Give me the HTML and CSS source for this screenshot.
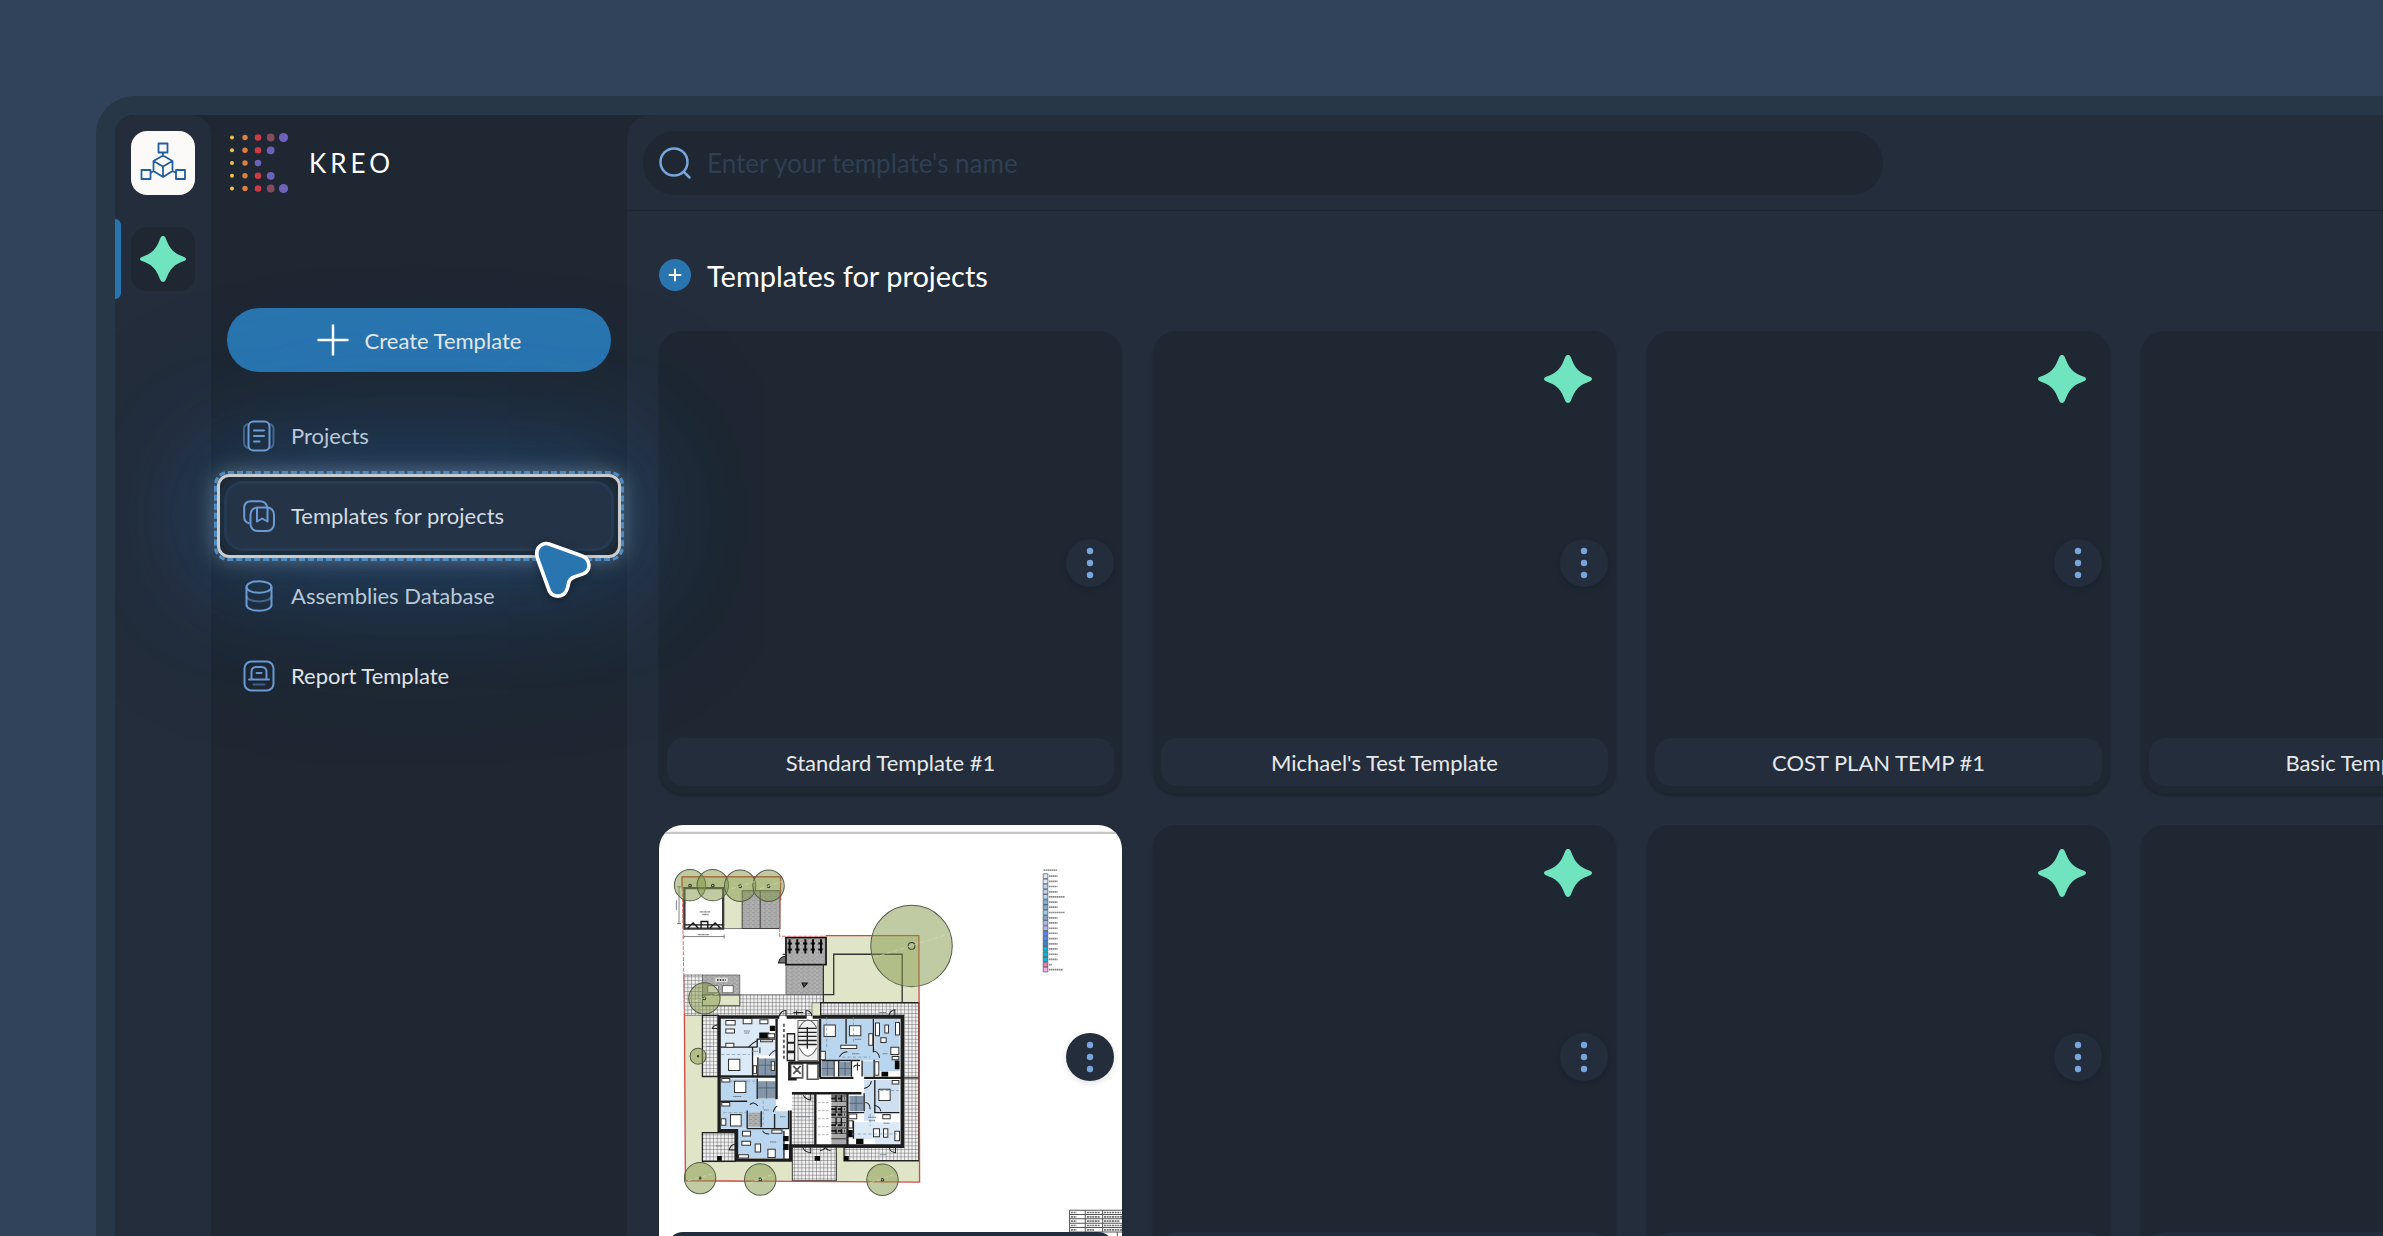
FILE: index.html
```html
<!DOCTYPE html>
<html lang="en">
<head>
    <meta charset="UTF-8">
    <meta name="viewport" content="width=device-width, initial-scale=1.0">
    <title>Kreo - Templates for projects</title>
    <link rel="stylesheet" href="styles.css">
</head>
<body>
    <svg class="defs" width="0" height="0" aria-hidden="true">
        <symbol id="star" viewBox="0 0 48 48">
            <path d="M26.700 2C29 7.500 30.500 11.500 34 15C37.500 18.500 41 19.800 46 21.800C48.700 22.900 48.700 25.100 46 26.200C41 28.200 37.500 29.500 34 33C30.500 36.500 29 40.500 26.700 46C25.600 48.600 22.400 48.600 21.300 46C19 40.500 17.500 36.500 14 33C10.500 29.500 7 28.200 2 26.200C-.7 25.100-.7 22.900 2 21.800C7 19.800 10.500 18.500 14 15C17.500 11.500 19 7.500 21.300 2C22.400-.6 25.600-.6 26.700 2Z" fill="#70e4bf"/>
        </symbol>
        <symbol id="dots" viewBox="0 0 48 48">
            <g fill="#77a5dc"><circle cx="24" cy="12" r="3.200"/><circle cx="24" cy="24" r="3.200"/><circle cx="24" cy="36" r="3.200"/></g>
        </symbol>
    </svg>

    <div class="window">
        <nav class="rail" aria-label="Products">
            <a href="#" class="rail-item rail-light" aria-label="Assemblies">
                <svg class="rail-icon" viewBox="0 0 64 64" fill="none" stroke="#235f9f" stroke-width="1.800" stroke-linejoin="round">
                    <rect x="27.500" y="12.500" width="9" height="9"/>
                    <rect x="10.500" y="39" width="9" height="9"/>
                    <rect x="45" y="39" width="9" height="9"/>
                    <path d="M32 21.500V24.500L41.500 30V40L32 46L22.500 40V30L32 24.500M22.500 30L32 35.500L41.500 30M32 35.500V46M22.500 40L19.500 42M41.500 40L45 42"/>
                </svg>
            </a>
            <a href="#" class="rail-item active" aria-label="Templates">
                <svg class="rail-star"><use href="#star"/></svg>
            </a>
        </nav>

        <aside class="sidebar">
            <div class="logo">
                <svg viewBox="0 0 64 64" aria-hidden="true">
                    <g fill="#f2c14f"><circle cx="5" cy="6.500" r="2"/><circle cx="5" cy="19.300" r="2"/><circle cx="5" cy="32" r="2"/><circle cx="5" cy="44.800" r="2"/><circle cx="5" cy="57.500" r="2"/></g>
                    <g fill="#de7f41"><circle cx="18" cy="6.500" r="2.700"/><circle cx="18" cy="19.300" r="2.700"/><circle cx="18" cy="32" r="2.700"/><circle cx="18" cy="44.800" r="2.700"/><circle cx="18" cy="57.500" r="2.700"/></g>
                    <g fill="#cc3a45"><circle cx="31" cy="6.500" r="3.300"/><circle cx="31" cy="19.300" r="3.300"/><circle cx="31" cy="44.800" r="3.300"/><circle cx="31" cy="57.500" r="3.300"/></g>
                    <g fill="#864a60"><circle cx="43.700" cy="6.500" r="3.900"/><circle cx="43.700" cy="57.500" r="3.900"/></g>
                    <g fill="#6c62bb"><circle cx="31" cy="32" r="3.300"/><circle cx="43.700" cy="19.300" r="3.900"/><circle cx="43.700" cy="44.800" r="3.900"/><circle cx="56.500" cy="6.500" r="4.600"/><circle cx="56.500" cy="57.500" r="4.600"/></g>
                </svg>
                <span>KREO</span>
            </div>

            <button type="button" class="create-btn">
                <svg viewBox="0 0 32 32" stroke="#fff" stroke-width="2.500" stroke-linecap="round"><path d="M16 1.500V30.500M1.500 16H30.500"/></svg>
                Create Template
            </button>

            <nav class="menu" aria-label="Main">
                <a href="#" class="menu-item dimmed">
                    <svg viewBox="0 0 32 32" fill="none" stroke="#6b9bd5" stroke-width="2" stroke-linecap="round">
                        <path d="M5.500 4C2.800 4.400 1 6 1 9V22C1 25.500 2.800 27.500 5.500 28M26.500 4C29 4.400 30.500 6 30.500 9V22C30.500 25.500 29 27.500 26.500 28" opacity=".5"/>
                        <rect x="5.500" y="1.500" width="21" height="29" rx="5"/>
                        <path d="M11 10.500H21M11 16H21M11 21.500H16.500"/>
                    </svg>
                    <span>Projects</span>
                </a>
                <a href="#" class="menu-item selected">
                    <svg viewBox="0 0 32 32" fill="none" stroke="#6b9bd5" stroke-width="2" stroke-linejoin="round">
                        <path d="M6.500 23.500C3 22.500 1.200 20.500 1.200 17V8C1.200 3.500 3.500 1.200 8 1.200H16.500C20.500 1.200 23.500 3 24.200 7.200"/>
                        <rect x="7.500" y="7.500" width="23.500" height="23.500" rx="7"/>
                        <path d="M14 8V21.500L19.200 18.500L24.500 21.500V8"/>
                    </svg>
                    <span>Templates for projects</span>
                    <i class="spotlight"></i>
                    <svg class="cursor" viewBox="1030 540 180 180" aria-hidden="true">
                        <path d="M1057 554C1064 550 1070 549 1078 552L1178 588C1202 598 1205 630 1182 641C1160 650 1143 649 1138 665C1134 680 1134 695 1120 704C1106 713 1086 708 1079 693L1044 597C1038 577 1042 562 1057 554Z" fill="#2975b0" stroke="#fff" stroke-width="11"/>
                    </svg>
                </a>
                <a href="#" class="menu-item dimmed">
                    <svg viewBox="0 0 32 32" fill="none" stroke="#6b9bd5" stroke-width="2">
                        <ellipse cx="16" cy="7" rx="12.500" ry="5.800"/>
                        <path d="M3.500 7V25C3.500 28.200 9 30.800 16 30.800S28.500 28.200 28.500 25V7"/>
                        <path d="M3.500 16C3.500 19.200 9 21.500 16 21.500S28.500 19.200 28.500 16" opacity=".5"/>
                    </svg>
                    <span>Assemblies Database</span>
                </a>
                <a href="#" class="menu-item">
                    <svg viewBox="0 0 32 32" fill="none" stroke="#6b9bd5" stroke-width="2" stroke-linecap="round">
                        <rect x="1.500" y="1.500" width="29" height="29" rx="7"/>
                        <path d="M6 19.500H26M8.500 19V12C8.500 9 10.500 7 13.500 7H18.500C21.500 7 23.500 9 23.500 12V19M13.500 13H18.500"/>
                        <path d="M10.500 24.500H21.500" opacity=".5"/>
                    </svg>
                    <span>Report Template</span>
                </a>
            </nav>
        </aside>

        <main class="main">
            <header class="topbar">
                <label class="search">
                    <svg viewBox="0 0 32 32" fill="none" stroke="#77a5dc" stroke-width="2.500" stroke-linecap="round"><circle cx="15" cy="15" r="13.500"/><path d="M25 25L30.500 30.500"/></svg>
                    <input type="text" placeholder="Enter your template's name" aria-label="Enter your template's name">
                </label>
            </header>

            <section class="content">
                <div class="heading">
                    <button type="button" class="add-btn" aria-label="Add template">
                        <svg viewBox="0 0 32 32" stroke="#fff" stroke-width="2" stroke-linecap="round"><path d="M16 10.500V21.500M10.500 16H21.500"/></svg>
                    </button>
                    <h1>Templates for projects</h1>
                </div>

                <div class="cards">
                    <article class="card">
                        <button type="button" class="more" aria-label="More"><svg><use href="#dots"/></svg></button>
                        <div class="card-name">Standard Template #1</div>
                    </article>
                    <article class="card">
                        <svg class="badge"><use href="#star"/></svg>
                        <button type="button" class="more" aria-label="More"><svg><use href="#dots"/></svg></button>
                        <div class="card-name">Michael's Test Template</div>
                    </article>
                    <article class="card">
                        <svg class="badge"><use href="#star"/></svg>
                        <button type="button" class="more" aria-label="More"><svg><use href="#dots"/></svg></button>
                        <div class="card-name">COST PLAN TEMP #1</div>
                    </article>
                    <article class="card">
                        <div class="card-name">Basic Template #1</div>
                    </article>

                    <article class="card">
                        <svg class="plan" viewBox="58 75 1386 1386" aria-hidden="true">
                            <defs>
                                <pattern id="tile" width="11" height="11" patternUnits="userSpaceOnUse"><rect width="11" height="11" fill="#f1f1f1"/><path d="M0 0H11M0 0V11" stroke="#666" stroke-width="3"/></pattern>
                                <pattern id="brick" width="16" height="12" patternUnits="userSpaceOnUse"><rect width="16" height="12" fill="#b2b2b2"/><path d="M0 2H11M6 8H16" stroke="#868686" stroke-width="2"/></pattern>
                            </defs>
                            <rect x="58" y="75" width="1386" height="1386" fill="#fff"/>
                            <rect x="58" y="95" width="1386" height="7" fill="#c6c6c6"/>

                            <!-- lawns -->
                            <g fill="#e0e5c8">
                                <path d="M128 230H422V385H128ZM550 405H836V607H550ZM516 605H542V645H516ZM134 645H236V1000H188V1080H455V1140H137ZM590 1040H612V1080H838V1144H590Z"/>
                            </g>

                            <!-- paving -->
                            <path d="M132 524H188V583H550V607H516V645H134Z" fill="url(#tile)" stroke="#555" stroke-width="2"/>
                            <path d="M542 607H836V1080H612V1040H790V645H542Z" fill="url(#tile)" stroke="#222" stroke-width="4"/>
                            <path d="M790 832H836" stroke="#222" stroke-width="4"/>
                            <rect x="188" y="645" width="48" height="183" fill="url(#tile)" stroke="#222" stroke-width="4"/>
                            <rect x="188" y="996" width="98" height="86" fill="url(#tile)" stroke="#222" stroke-width="4"/>
                            <rect x="457" y="1036" width="132" height="104" fill="url(#tile)" stroke="#333" stroke-width="3"/>

                            <!-- pavilion -->
                            <path d="M134 264H250V385H134Z" fill="#fff" stroke="#3a3a3a" stroke-width="7"/>
                            <path d="M134 374H250M144 384L160 368L176 384M184 384V364H204V384M210 384L226 368L242 384" fill="none" stroke="#111" stroke-width="4"/>
                            <path d="M118 260V370M112 260H124M112 370H124M132 409H253M132 403V415M253 403V415M110 300V330" fill="none" stroke="#444" stroke-width="2"/>
                            <path d="M180 335H212M188 343H206M174 403H208" stroke="#777" stroke-width="4" stroke-dasharray="3 1"/>
                            <path d="M307 272H420V385H307ZM361 272V385" fill="url(#brick)" stroke="#444" stroke-width="3"/>
                            <path d="M250 385H420" stroke="#444" stroke-width="2"/>

                            <!-- bike store and parking -->
                            <rect x="438" y="492" width="112" height="90" fill="url(#brick)" stroke="#555" stroke-width="2"/>
                            <rect x="438" y="412" width="120" height="81" fill="url(#brick)" stroke="#111" stroke-width="5"/>
                            <path d="M449 417V460M472 417V460M496 417V460M519 417V460M543 417V460" stroke="#0b0b0b" stroke-width="6"/>
                            <path d="M443 430H550M443 448H550" stroke="#0b0b0b" stroke-width="6" stroke-dasharray="13 10"/>
                            <path d="M436 462H428M436 488H416Q418 470 436 468M486 548H502L492 560Z" fill="#111" fill-opacity=".6" stroke="#111" stroke-width="3"/>
                            <rect x="188" y="524" width="112" height="60" fill="url(#brick)" stroke="#555" stroke-width="2"/>
                            <rect x="188" y="584" width="112" height="32" fill="#e0e5c8" stroke="#444" stroke-width="3"/>
                            <path d="M248 556H280V577H248ZM204 556H236V577H204Z" fill="#fff" stroke="#444" stroke-width="2"/>
                            <rect x="226" y="532" width="38" height="13" fill="#ddd"/>
                            <path d="M232 539H258" stroke="#333" stroke-width="6" stroke-dasharray="4 4"/>
                            <path d="M550 583H581V462H786V605M550 492V607" fill="none" stroke="#333" stroke-width="4"/>

                            <!-- building footprint -->
                            <path d="M236 648H788V1037H450V1080H288V990H236Z" fill="#fff"/>

                            <!-- flats -->
                            <g fill="#dce9f6">
                                <path d="M242 656H390V740H242ZM242 742H335V824H242ZM300 720H408V765H300ZM640 965H778V1030H705V1015H640Z"/>
                            </g>
                            <g fill="#bad5ee">
                                <path d="M540 656H700V780H540ZM704 656H778V812H718V780H704ZM548 745H704V780H548ZM242 834H352V900H242ZM242 904H322V984H242ZM320 895H408V984H320ZM404 932H446V982H404ZM292 986H430V1072H292ZM668 782H700V826H668Z"/>
                            </g>
                            <path d="M672 838H704V960H672ZM704 838H778V934H704Z" fill="#cddff1"/>
                            <g fill="#8396a9">
                                <rect x="356" y="774" width="50" height="50"/><rect x="354" y="842" width="54" height="52"/>
                                <rect x="545" y="782" width="34" height="44"/><rect x="598" y="784" width="34" height="42"/>
                                <rect x="628" y="886" width="42" height="46"/>
                            </g>
                            <rect x="326" y="936" width="38" height="42" fill="url(#brick)"/>

                            <!-- entrance and stores -->
                            <rect x="456" y="880" width="68" height="154" fill="url(#tile)"/>
                            <rect x="574" y="880" width="44" height="154" fill="#aaa"/>
                            <path d="M574 886H618M574 902H618M574 918H618M574 934H618M574 950H618M574 966H618M574 982H618M574 998H618M574 1014H618" stroke="#333" stroke-width="3"/>
                            <path d="M574 894H614M574 926H614M574 942H614M574 974H614M574 990H614" stroke="#111" stroke-width="6" stroke-dasharray="14 5"/>
                            <path d="M588 884V1000M604 884V1000" stroke="#111" stroke-width="4" stroke-dasharray="20 14"/>
                            <path d="M534 906H570M534 930H570M534 954H570M534 978H570M534 1002H570" stroke="#999" stroke-width="2" stroke-dasharray="8 4"/>

                            <!-- stair core -->
                            <path d="M474 660H534V780H474ZM478 682Q504 636 530 682M478 742Q504 792 530 742" fill="#f0f0f0" stroke="#666" stroke-width="3"/>
                            <path d="M474 684H530M474 696H530M474 708H530M474 720H530M474 732H530M502 680V745" stroke="#222" stroke-width="4"/>
                            <path d="M442 700H464V726H442ZM442 728H464V752H442ZM442 756H464V780H442Z" fill="#eee" stroke="#222" stroke-width="4"/>
                            <path d="M452 790H488V832H452ZM502 790H534V836H502ZM460 796L482 820M482 796L460 820" fill="none" stroke="#555" stroke-width="5"/>
                            <path d="M432 670V780" stroke="#222" stroke-width="4" stroke-dasharray="9 7"/>

                            <!-- outer and party walls -->
                            <g fill="none" stroke="#1c1d1f">
                                <path d="M418 650H238V990H290V1078H452V1036H786V650H518M440 650H500" stroke-width="10"/>
                                <path d="M238 828H408M410 656V896M540 656V830M538 832H640M672 832H786M448 784V836H470M452 930V1034M456 878H664M622 878V1034M526 880V1034M448 786H540" stroke-width="7"/>
                                <path d="M242 740H352M352 714V740M352 716H406M338 740V826M354 770V826M352 834V895M242 902H322M322 930V984M322 984H446V930M364 932V980M404 940V984M618 656V730M700 656V755M702 778V830M546 780H660M582 782V828M596 782V828M634 782V828M666 780V828M704 838V936H778M672 878V932M624 936H672M640 960V1014M432 990V1074" stroke-width="4"/>
                            </g>

                            <!-- fixtures -->
                            <g fill="#090909">
                                <path d="M358 696H388V714H358ZM390 676H406V692H390ZM764 780H778V806H764ZM724 814H744V828H724ZM624 988H638V1010H624ZM648 1014H670V1030H648ZM430 1006H446V1022H430ZM430 1030H446V1048H430ZM232 1066H246V1080H232ZM524 1066H540V1080H524ZM612 1066H626V1080H612Z"/>
                            </g>
                            <g fill="#fff" stroke="#333" stroke-width="3">
                                <path d="M266 776H300V810H266ZM284 842H318V876H284ZM272 942H304V976H272ZM552 674H586V708H552ZM628 676H662V706H628ZM716 866H750V900H716Z"/>
                                <path d="M258 660H286V674H258ZM258 686H284V698H258ZM310 654H336V670H310ZM258 728H282V740H258ZM360 658H384V670H360ZM384 700H404V712H384ZM706 668H718V706H706ZM734 674H745V698H734ZM766 666H778V704H766ZM722 712H738V726H722ZM752 740H776V762H752ZM756 768H776V778H756ZM704 784H716V824H704Z"/>
                                <path d="M308 992H332V1006H308ZM306 1022H332V1034H306ZM346 1030H362V1054H346ZM384 1046H406V1070H384ZM296 1062H326V1072H296ZM396 988H426V998H396ZM700 984H718V1008H700ZM730 984H743V1010H730ZM764 992H778V1020H764ZM728 942H750V954H728ZM626 960H638V982H626ZM626 940H650V954H626ZM246 906H270V916H246ZM246 834H270V844H246ZM244 954H258V974H244ZM542 752H556V778H542ZM602 734H650V744H602ZM686 700H698V734H686ZM756 840H776V850H756ZM340 796H350V820H340ZM394 784H404V810H394ZM362 718H398V724H362Z"/>
                            </g>
                            <g fill="none" stroke="#222" stroke-width="3">
                                <path d="M326 740Q340 726 352 720M388 766Q398 750 410 750M360 758V740M330 912Q340 900 354 916M368 990Q372 1000 388 1000M400 934Q404 920 412 916M418 648Q422 630 438 630V648M516 648Q514 630 498 630V648M460 636H490M470 630V644M234 684H218Q220 674 236 674M764 648V628Q750 630 746 645M286 1048H268Q272 1032 286 1030M766 1038V1056Q750 1054 748 1042M598 770Q604 756 622 754M652 786V810M640 800Q646 790 660 796M702 752Q716 754 718 772M672 864Q690 860 694 842M676 906Q690 908 690 926M702 914Q720 918 722 932M512 880V898Q496 896 490 884M512 1040V1056Q494 1054 488 1040M540 1050Q554 1048 556 1038Q558 1048 572 1050"/>
                                <path d="M244 762H330M272 842H350M250 936H320M370 900V980M636 1000H770" stroke="#7b91a6" stroke-width="2" stroke-dasharray="10 6"/>
                                <path d="M606 770H690M640 650V730M560 650V740M720 870H776M690 940V976" stroke="#6f889f" stroke-width="2" stroke-dasharray="10 6"/>
                                <path d="M356 794H406M376 774V824M354 862H408M380 842V894M545 804H579M562 782V826M598 804H632M615 784V826M628 908H670M648 886V932" stroke="#45515e" stroke-width="2"/>
                            </g>
                            <path d="M312 692H330M314 698H328M336 752H354M644 716H664M636 760H658M728 760H742M390 1024H410M420 948H436M372 928H388M280 888H304M684 950H708M686 960H706M730 968H748M468 948H510M228 1036H246M200 738H218M718 636H738M720 1062H738" stroke="#6b7681" stroke-width="3" stroke-dasharray="4 1"/>

                            <!-- site boundary -->
                            <path d="M127 230H422L419 408H558M127 230L130 408L134 640" fill="none" stroke="#e87070" stroke-width="3" stroke-dasharray="12 4"/>
                            <path d="M127 264V230H422V300M558 406H836L838 1144L137 1140L134 640" fill="none" stroke="#cf4b43" stroke-width="4"/>

                            <!-- trees -->
                            <g fill="#819747" fill-opacity=".5" stroke="#555d48" stroke-width="3">
                                <circle cx="151" cy="255" r="47"/><circle cx="219" cy="255" r="47"/><circle cx="301" cy="257" r="47"/><circle cx="386" cy="257" r="47"/>
                                <circle cx="814" cy="437" r="122"/><circle cx="194" cy="594" r="47"/><circle cx="175" cy="767" r="24"/>
                                <circle cx="181" cy="1132" r="47"/><circle cx="361" cy="1136" r="47"/><circle cx="727" cy="1137" r="47"/>
                            </g>
                            <g fill="none" stroke="#333b28" stroke-width="3">
                                <circle cx="151" cy="256" r="4"/><circle cx="219" cy="256" r="4"/><circle cx="301" cy="258" r="4"/><circle cx="386" cy="258" r="4"/>
                                <circle cx="814" cy="437" r="10"/><circle cx="194" cy="594" r="4"/><circle cx="175" cy="767" r="2"/>
                                <circle cx="181" cy="1132" r="3"/><circle cx="361" cy="1136" r="4"/><circle cx="727" cy="1137" r="4"/>
                            </g>
                            <path d="M700 472L930 400M164 602L235 580M275 266L345 244M360 266L425 244M145 1140L215 1120M325 1148L396 1122M690 1146L760 1122" stroke="#d5dcb9" stroke-width="2" stroke-dasharray="14 7"/>

                            <!-- legend -->
                            <path d="M1209 210H1250" stroke="#999" stroke-width="5" stroke-dasharray="5 1"/>
                            <g stroke="#4b5259" stroke-width="2">
                                <path d="M1208 221h14v14h-14zM1208 237h14v14h-14z" fill="#dfeaf5"/>
                                <path d="M1208 252h14v14h-14zM1208 268h14v14h-14zM1208 283h14v14h-14z" fill="#b9d4ec"/>
                                <path d="M1208 299h14v14h-14zM1208 314h14v14h-14z" fill="#82aeda"/>
                                <path d="M1208 330h14v14h-14z" fill="#a6c8e6"/>
                                <path d="M1208 346h14v14h-14z" fill="#7fa7c9"/>
                                <path d="M1208 361h14v14h-14zM1208 377h14v14h-14z" fill="#b7b5ea"/>
                                <path d="M1208 392h14v14h-14zM1208 408h14v14h-14z" fill="#5484ea"/>
                                <path d="M1208 424h14v14h-14z" fill="#3f83c4"/>
                                <path d="M1208 439h14v14h-14zM1208 455h14v14h-14zM1208 470h14v14h-14z" fill="#10b4d4"/>
                                <path d="M1208 486h14v14h-14z" fill="#ec7aab"/>
                                <path d="M1208 501h14v14h-14z" fill="#eeb1e6"/>
                            </g>
                            <path d="M1225 228H1251M1225 244H1251M1225 259H1251M1225 275H1251M1225 290H1273M1225 306H1251M1225 321H1251M1225 337H1273M1225 353H1251M1225 368H1251M1225 384H1251M1225 399H1251M1225 415H1251M1225 431H1251M1225 446H1251M1225 462H1251M1225 477H1251M1225 493H1234M1225 508H1268" stroke="#8a8a8a" stroke-width="5" stroke-dasharray="5 1"/>

                            <!-- title block -->
                            <path d="M1287 1228H1444M1287 1241H1444M1287 1254H1444M1287 1267H1444M1287 1280H1444M1287 1293H1444M1287 1228V1296M1334 1228V1293M1386 1228V1293M1430 1293V1310" stroke="#555" stroke-width="3"/>
                            <path d="M1291 1235H1308M1339 1235H1378M1390 1235H1440M1291 1248H1308M1339 1248H1378M1390 1248H1444M1291 1261H1308M1339 1261H1378M1390 1261H1436M1291 1274H1308M1339 1274H1378M1390 1274H1444M1291 1287H1308M1339 1287H1360M1390 1287H1444" stroke="#707070" stroke-width="5" stroke-dasharray="6 2"/>
                        </svg>
                        <button type="button" class="more" aria-label="More"><svg><use href="#dots"/></svg></button>
                        <div class="card-name"></div>
                    </article>
                    <article class="card">
                        <svg class="badge"><use href="#star"/></svg>
                        <button type="button" class="more" aria-label="More"><svg><use href="#dots"/></svg></button>
                        <div class="card-name"></div>
                    </article>
                    <article class="card">
                        <svg class="badge"><use href="#star"/></svg>
                        <button type="button" class="more" aria-label="More"><svg><use href="#dots"/></svg></button>
                        <div class="card-name"></div>
                    </article>
                    <article class="card">
                        <div class="card-name"></div>
                    </article>
                </div>
            </section>
        </main>
    </div>
</body>
</html>
```
FILE: styles.css
```css
* {
    box-sizing: border-box;
}

body {
    margin: 0;
    padding: 96px 0 0 96px;
    height: 100vh;
    overflow: hidden;
    background-color: #31435a;
    font-family: Lato, "Open Sans", sans-serif;
    font-size: 22px;
    color: #e6e9ec;
}

a {
    color: inherit;
    text-decoration: none;
}

button {
    border: none;
    padding: 0;
    font: inherit;
    color: inherit;
    cursor: pointer;
}

svg {
    display: block;
    flex: none;
}

.defs {
    position: absolute;
}

.window {
    display: flex;
    min-height: 100vh;
    overflow: hidden;
    border: 19px solid #283747;
    border-right: none;
    border-radius: 38px 0 0 0;
    background-color: #1e2732;
}

/* left rail */
.rail {
    display: flex;
    flex-direction: column;
    align-items: center;
    gap: 32px;
    flex: none;
    width: 96px;
    padding-top: 16px;
    background-color: #232d3b;
    border-radius: 20px 20px 0 0;
}

.rail-item {
    position: relative;
    display: flex;
    align-items: center;
    justify-content: center;
    width: 64px;
    height: 64px;
    border-radius: 16px;
    background-color: #1e2732;
}

.rail-light {
    background-color: #fcfaf8;
}

.rail-item.active::before {
    content: "";
    position: absolute;
    left: -16px;
    top: -8px;
    width: 6px;
    height: 80px;
    border-radius: 0 6px 6px 0;
    background-color: #2975b0;
}

.rail-icon {
    width: 64px;
    height: 64px;
}

.rail-star {
    width: 46px;
    height: 46px;
}

/* sidebar */
.sidebar {
    flex: none;
    width: 416px;
    padding: 16px;
}

.logo {
    display: flex;
    align-items: center;
    gap: 18px;
    height: 64px;
    margin-bottom: 113px;
    font-size: 26px;
    letter-spacing: 4px;
    color: #fff;
}

.logo svg {
    width: 64px;
    height: 64px;
}

.create-btn {
    display: flex;
    align-items: center;
    justify-content: center;
    gap: 16px;
    width: 100%;
    height: 64px;
    border-radius: 32px;
    background-color: #2975b0;
}

.create-btn svg {
    width: 32px;
    height: 32px;
}

.menu {
    display: flex;
    flex-direction: column;
    gap: 16px;
    margin-top: 32px;
}

.menu-item {
    position: relative;
    display: flex;
    align-items: center;
    gap: 16px;
    height: 64px;
    padding: 0 16px;
    border-radius: 16px;
}

.menu-item svg {
    width: 32px;
    height: 32px;
}

.menu-item span {
    padding-bottom: 2px;
}

.menu-item.dimmed {
    z-index: 2;
    color: #bac9d9;
}

.menu-item.selected {
    z-index: 1;
    background-color: #243346;
    color: #d3dbe2;
    box-shadow: 0 0 0 3px #263a52, 0 0 0 8px #1e2d3c;
}

/* glowing frame round the selected item */
.spotlight {
    position: absolute;
    inset: -10px;
    border: 3px solid #c9cccf;
    border-radius: 12px;
    box-shadow: 0 0 22px rgba(175, 195, 215, 0.5), 0 0 110px 10px rgba(41, 110, 180, 0.42), 0 0 200px rgba(41, 100, 170, 0.3);
    pointer-events: none;
}

.spotlight::after {
    content: "";
    position: absolute;
    inset: -6px;
    border: 3px dashed #4e8dc4;
    border-radius: 14px;
}

.menu-item .cursor {
    position: absolute;
    right: 18px;
    bottom: -52px;
    width: 60px;
    height: 60px;
    filter: drop-shadow(0 2px 4px rgba(0, 0, 0, 0.35));
}

/* main area */
.main {
    flex: 1;
    min-width: 0;
    background-color: #232d3b;
    border-radius: 24px 0 0 0;
}

.topbar {
    height: 96px;
    padding: 16px;
    border-bottom: 1px solid #1c2632;
}

.search {
    display: flex;
    align-items: center;
    gap: 16px;
    width: 100%;
    max-width: 1240px;
    height: 64px;
    padding: 0 16px;
    border-radius: 32px;
    background-color: #1e2732;
}

.search svg {
    width: 32px;
    height: 32px;
}

.search input {
    flex: 1;
    padding: 0;
    border: none;
    outline: none;
    background: transparent;
    font: inherit;
    font-size: 26px;
    color: #e6e9ec;
}

.search input::placeholder {
    color: #2f3f53;
    opacity: 1;
}

.content {
    padding: 48px 32px;
}

.heading {
    display: flex;
    align-items: center;
    gap: 16px;
    height: 32px;
    margin-bottom: 40px;
}

.heading h1 {
    margin: 0;
    font-size: 29px;
    font-weight: normal;
    color: #fff;
}

.add-btn {
    width: 32px;
    height: 32px;
    border-radius: 50%;
    background-color: #2975b0;
}

.cards {
    display: grid;
    grid-template-columns: repeat(4, 463px);
    gap: 31px;
}

.card {
    position: relative;
    display: flex;
    flex-direction: column;
    justify-content: flex-end;
    aspect-ratio: 1;
    padding: 8px;
    border-radius: 24px;
    background-color: #1e2732;
    box-shadow: 0 2px 2px #1c2530;
}

.card-name {
    position: relative;
    display: flex;
    align-items: center;
    justify-content: center;
    height: 48px;
    border-radius: 16px;
    background-color: #232d3b;
}

.badge {
    position: absolute;
    top: 24px;
    right: 24px;
    width: 48px;
    height: 48px;
}

.more {
    position: absolute;
    top: calc(50% - 24px);
    right: 8px;
    width: 48px;
    height: 48px;
    border-radius: 50%;
    background-color: #232d3b;
    box-shadow: 0 2px 6px rgba(0, 0, 0, 0.12);
}

.more svg {
    width: 48px;
    height: 48px;
}

.plan {
    position: absolute;
    inset: 0;
    width: 100%;
    height: 100%;
    border-radius: 24px;
}
```
